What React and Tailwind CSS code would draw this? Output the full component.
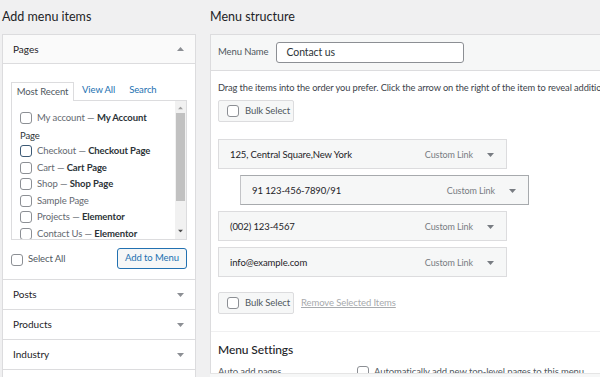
import React from 'react';

const font = { fontFamily: 'Lato, "Open Sans", sans-serif' };

const Caret = ({ up = false, className = '' }) => (
  <svg width="7" height="4" viewBox="0 0 7 4" className={className}>
    <path d={up ? 'M0 4 L3.5 0 L7 4 Z' : 'M0 0 L7 0 L3.5 4 Z'} fill="currentColor" />
  </svg>
);

const Check = ({ focus = false, className = '' }) => (
  <span
    className={`inline-block shrink-0 w-[12px] h-[12px] rounded-[3px] bg-white border ${
      focus ? 'border-[#3d5a75]' : 'border-[#8c8f94]'
    } ${className}`}
  />
);

const pages = [
  { title: 'My account', state: 'My Account', wrap: 'Page' },
  { title: 'Checkout', state: 'Checkout Page', focus: true },
  { title: 'Cart', state: 'Cart Page' },
  { title: 'Shop', state: 'Shop Page' },
  { title: 'Sample Page' },
  { title: 'Projects', state: 'Elementor' },
  { title: 'Contact Us', state: 'Elementor' },
];

const menuItems = [
  { label: '125, Central Square,New York' },
  { label: '91 123-456-7890/91', sub: true },
  { label: '(002) 123-4567' },
  { label: 'info@example.com' },
];

function AddItems() {
  return (
    <div className="w-[196px] shrink-0 pl-[2px]">
      <h2 className="h-[34px] flex items-center text-[12.5px] text-[#1d2327]">Add menu items</h2>
      <div className="border border-[#dcdcde] bg-white">
        {/* Pages (open) */}
        <div className="h-[29px] px-[10px] flex items-center justify-between bg-[#fafafa] border-b border-[#dcdcde]">
          <span className="text-[10px] text-[#1d2327]">Pages</span>
          <Caret up className="text-[#8c8f94] mr-[1px]" />
        </div>
        <div className="px-[8px] pt-[17px] tracking-[-0.1px]">
          <div className="flex items-end text-[9.5px] h-[19px]">
            <span className="h-[19px] w-[63px] justify-center flex items-center border border-b-0 border-[#dcdcde] bg-white text-[#50575e] relative top-[1px]">
              Most Recent
            </span>
            <span className="h-[19px] ml-[8px] flex items-center text-[#2271b1]">View All</span>
            <span className="h-[19px] ml-[14px] flex items-center text-[#2271b1]">Search</span>
          </div>
          <div className="h-[140px] border border-[#dcdcde] flex overflow-hidden">
            <div className="flex-1 pl-[8px] pt-[11px] overflow-hidden">
              {pages.map((p) => (
                <div key={p.title} className="mb-[4px]">
                  <div className="flex items-center gap-[5px] h-[12.5px] text-[9.5px] whitespace-nowrap">
                    <Check focus={p.focus} />
                    <span className="text-[#646970]">
                      {p.title}
                      {p.state && (
                        <>
                          {' — '}
                          <span className="font-bold text-[#2c3338]">{p.state}</span>
                        </>
                      )}
                    </span>
                  </div>
                  {p.wrap && (
                    <div className="text-[9.5px] text-[#2c3338] h-[12.5px] mt-[4px]">{p.wrap}</div>
                  )}
                </div>
              ))}
            </div>
            <div className="w-[11px] bg-[#f1f1f1] flex flex-col items-center">
              <Caret up className="text-[#a0a0a0] mt-[5px] scale-75" />
              <div className="w-[9px] h-[88px] bg-[#c1c1c1] mt-[3px]" />
              <div className="flex-1" />
              <Caret className="text-[#505050] mb-[6px] scale-75" />
            </div>
          </div>
          <div className="h-[39px] flex items-center justify-between">
            <label className="flex items-center gap-[5px] text-[9.5px] text-[#50575e]">
              <Check />
              Select All
            </label>
            <button className="h-[21px] w-[70px] rounded-[3px] border border-[#2271b1] bg-[#f6f7f7] text-[9.5px] text-[#2271b1] mt-[-2px]">
              Add to Menu
            </button>
          </div>
        </div>
        {['Posts', 'Products', 'Industry'].map((t) => (
          <div key={t} className="h-[30px] px-[10px] flex items-center justify-between border-t border-[#dcdcde]">
            <span className="text-[10px] text-[#1d2327]">{t}</span>
            <Caret className="text-[#8c8f94] mr-[1px]" />
          </div>
        ))}
        <div className="h-[30px] border-t border-[#dcdcde]" />
      </div>
    </div>
  );
}

function BulkSelect() {
  return (
    <span className="h-[22px] w-[76px] flex items-center gap-[6px] pl-[8px] rounded-[2px] border border-[#dcdcde] bg-[#f6f7f7] text-[9.5px] text-[#50575e] whitespace-nowrap">
      <Check />
      Bulk Select
    </span>
  );
}

function MenuStructure() {
  return (
    <div className="flex-1 ml-[14px] min-w-0">
      <h2 className="h-[34px] flex items-center text-[12.5px] text-[#1d2327]">Menu structure</h2>
      <div className="border-l border-t border-[#dcdcde] bg-white w-[420px] h-[400px] tracking-[-0.1px]">
        <div className="h-[36px] flex items-center px-[7px] gap-[8px] bg-[#f6f7f7] border-b border-[#dcdcde]">
          <span className="text-[9.5px] text-[#50575e]">Menu Name</span>
          <div className="w-[188px] h-[21px] flex items-center px-[9px] rounded-[3px] border border-[#8c8f94] bg-white text-[10.5px] text-[#2c3338]">
            Contact us
          </div>
        </div>
        <div className="px-[7px]">
          <p className="mt-[10px] text-[9.3px] text-[#3c434a] whitespace-nowrap">
            Drag the items into the order you prefer. Click the arrow on the right of the item to reveal additional configuration options.
          </p>
          <div className="mt-[5px]">
            <BulkSelect />
          </div>
          <div className="mt-[17px] flex flex-col gap-[6px]">
            {menuItems.map((m) => (
              <div
                key={m.label}
                className={`h-[30px] w-[289px] flex items-center justify-between pl-[11px] pr-[12px] pt-[2px] bg-[#f6f7f7] border ${
                  m.sub ? 'ml-[22px] border-[#a7aaad] border-l-[#c3c4c7]' : 'border-[#dcdcde]'
                }`}
              >
                <span className="text-[9.5px] text-[#1d2327]">{m.label}</span>
                <span className="flex items-center gap-[14px] text-[9px] text-[#787c82]">
                  Custom Link
                  <Caret className="text-[#787c82]" />
                </span>
              </div>
            ))}
          </div>
          <div className="mt-[15px] flex items-center gap-[7px]">
            <BulkSelect />
            <span className="text-[9.5px] text-[#a7aaad] underline">Remove Selected Items</span>
          </div>
        </div>
        <div className="mt-[17px] border-t border-[#f0f0f1] px-[7px]">
          <h3 className="mt-[12px] text-[12px] font-medium text-[#1d2327] leading-none">Menu Settings</h3>
          <div className="mt-[9px] flex items-start text-[9.5px] text-[#50575e] whitespace-nowrap">
            <span className="w-[139px]">Auto add pages</span>
            <label className="flex items-center gap-[5px]">
              <Check />
              Automatically add new top-level pages to this menu
            </label>
          </div>
        </div>
      </div>
    </div>
  );
}

export default function App() {
  return (
    <div style={font} className="w-[600px] h-[377px] overflow-hidden bg-[#f0f0f1] flex relative">
      <AddItems />
      <MenuStructure />
      <div className="absolute left-[210px] right-0 bottom-0 h-[4px] bg-[#f6f7f7] border-t border-[#e5e5e5]" />
    </div>
  );
}
